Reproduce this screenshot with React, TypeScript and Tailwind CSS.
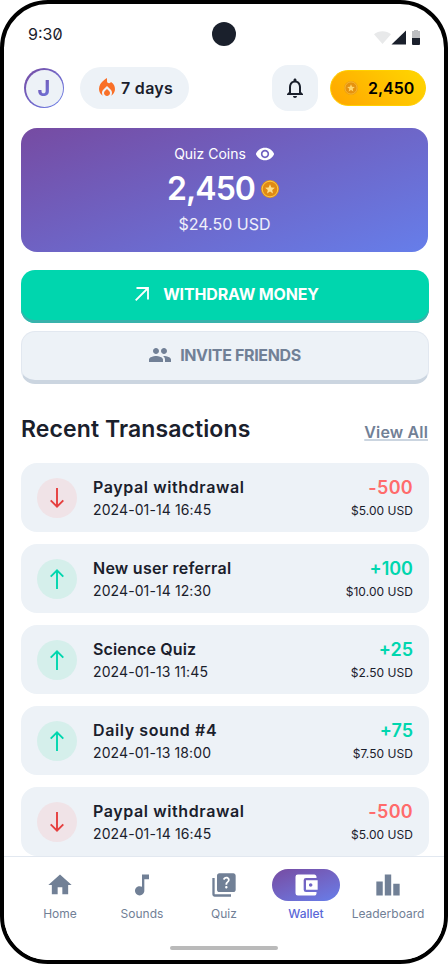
import {
  MdAccountBalanceWallet,
  MdHome,
  MdLeaderboard,
  MdLocalFireDepartment,
  MdMusicNote,
  MdNotificationsNone,
  MdPeople,
  MdQuiz,
  MdRemoveRedEye,
} from "react-icons/md";

const transactions = [
  { title: "Paypal withdrawal", date: "2024-01-14 16:45", coins: "-500", usd: "$5.00 USD", out: true, tracking: "tracking-[0.6px]" },
  { title: "New user referral", date: "2024-01-14 12:30", coins: "+100", usd: "$10.00 USD", out: false, tracking: "tracking-[0.25px]" },
  { title: "Science Quiz", date: "2024-01-13 11:45", coins: "+25", usd: "$2.50 USD", out: false, tracking: "tracking-[0.15px]" },
  { title: "Daily sound #4", date: "2024-01-13 18:00", coins: "+75", usd: "$7.50 USD", out: false, tracking: "tracking-[0.6px]" },
  { title: "Paypal withdrawal", date: "2024-01-14 16:45", coins: "-500", usd: "$5.00 USD", out: true, tracking: "tracking-[0.6px]" },
];

function Coin({ className }: { className: string }) {
  return (
    <svg viewBox="0 0 18 18" className={className}>
      <circle cx="9" cy="9" r="9" fill="#e8940f" />
      <circle cx="9" cy="9" r="7.8" fill="#e08a12" stroke="#f9c64a" strokeWidth="1" />
      <path d="M9 4.2l1.4 3.2 3.5.3-2.7 2.3.8 3.4L9 11.6l-3 1.800.8-3.400-2.700-2.300 3.500-.3z" fill="#ffe08a" />
    </svg>
  );
}

function StatusBar() {
  return (
    <div className="flex h-12 items-center justify-between px-6 pt-3">
      <span className="w-24 text-base">
        <span className="[font-feature-settings:'zero']">9:30</span>
      </span>
      <div className="size-6 rounded-full bg-[#1a202c]" />
      <svg width="96" height="16" viewBox="0 0 96 16" className="mt-[7px]">
        <path d="M50 4.200C54.500.2 62.500.2 67 4.200L58.500 14z" fill="#e8e9ea" />
        <path d="M82 .5v14H67.500z" fill="#1a202c" />
        <path d="M88 1h2V0h4v1h2v7h-8z" fill="#bcbec1" />
        <path d="M88 8h8v6a1 1 0 0 1-1 1h-6a1 1 0 0 1-1-1z" fill="#1a202c" />
      </svg>
    </div>
  );
}

function Header() {
  return (
    <header className="mt-[13px] flex h-[46px] items-center pr-[18px] pl-5">
      <div className="size-10 rounded-full bg-linear-135 from-[#764ba2] to-[#667eea] p-[1.5px]">
        <div className="flex size-full items-center justify-center rounded-full bg-[#edf2f7] text-[22px] font-bold">
          <span className="bg-linear-135 from-[#764ba2] to-[#667eea] bg-clip-text text-transparent">J</span>
        </div>
      </div>
      <div className="ml-4 flex h-[42px] w-[109px] items-center rounded-full bg-[#edf2f7] pl-[15px]">
        <MdLocalFireDepartment className="size-6 text-[#f97028]" />
        <span className="ml-[2px] text-base font-semibold tracking-[0.3px] whitespace-nowrap">7 days</span>
      </div>
      <button className="ml-auto flex size-[46px] items-center justify-center rounded-2xl bg-[#edf2f7]">
        <MdNotificationsNone className="size-6" />
      </button>
      <div className="ml-3 flex h-9 w-24 items-center rounded-full border border-[#ffd000] bg-linear-45 from-[#ffa500] to-[#ffd700] pl-[13px] text-black">
        <Coin className="size-[14px] opacity-80" />
        <span className="ml-[10px] text-base font-semibold">2,450</span>
      </div>
    </header>
  );
}

function BalanceCard() {
  return (
    <section className="mt-[17px] mr-4 ml-[17px] flex h-[124px] flex-col items-center rounded-2xl bg-linear-[160deg] from-[#764ba2] to-[#667eea] pt-4 text-white">
      <div className="flex h-5 items-center gap-[9px] text-sm">
        <span>Quiz Coins</span>
        <MdRemoveRedEye className="size-5" />
      </div>
      <div className="mt-[5px] flex h-10 items-center gap-[6px] pr-[3px]">
        <span className="text-[32px] font-semibold tracking-[-0.9px]">2,450</span>
        <Coin className="size-[18px]" />
      </div>
      <span className="mt-[3px] text-base leading-6 text-white/90">$24.50 USD</span>
    </section>
  );
}

function Actions() {
  return (
    <div className="mt-[18px] mr-[15px] ml-[17px] flex flex-col gap-2">
      <button className="flex h-[53px] items-center justify-center gap-[14px] rounded-[14px] bg-[#00d6ae] pb-[5px] pl-1 font-bold text-white shadow-[inset_0_-3px_0_#38b2ac]">
        <svg viewBox="0 0 14 14" className="size-[14px]" fill="none" stroke="currentColor" strokeWidth="1.8">
          <path d="M.7 13.300L13 1M1.500 1H13v11.500" />
        </svg>
        <span className="tracking-[-0.15px]">WITHDRAW MONEY</span>
      </button>
      <button className="flex h-[53px] items-center justify-center gap-2 rounded-[14px] border border-b-4 border-[#e2e8f0] border-b-[#cbd5e0] bg-[#edf2f7] pr-px pb-[2px] font-bold text-[#718096]">
        <MdPeople className="size-6" />
        <span className="tracking-[-0.35px]">INVITE FRIENDS</span>
      </button>
    </div>
  );
}

function Transactions() {
  return (
    <section className="mt-[29px] mr-[15px] ml-[17px]">
      <div className="flex h-8 items-center justify-between">
        <h2 className="text-[23px] font-semibold tracking-[0.1px]">Recent Transactions</h2>
        <a className="mt-[6px] mr-px text-base font-semibold tracking-[0.15px] text-[#718096] underline decoration-[#cbd5e0] decoration-2 underline-offset-1">
          View All
        </a>
      </div>
      <ul className="mt-[18px] flex flex-col gap-3">
        {transactions.map((t, i) => (
          <li key={i} className="flex h-[69px] items-center rounded-2xl bg-[#edf2f7] px-4">
            <div className={`flex size-10 items-center justify-center rounded-full ${t.out ? "bg-[#f0e3e7]" : "bg-[#d5efeb]"}`}>
              <svg
                viewBox="0 0 16 20"
                className={`h-5 w-4 ${t.out ? "rotate-180 text-[#e53e3e]" : "text-[#00d6ae]"}`}
                fill="none"
                stroke="currentColor"
                strokeWidth="1.9"
              >
                <path d="M8 20V2M1.700 7.700L8 1.400l6.300 6.300" />
              </svg>
            </div>
            <div className="ml-4 flex flex-col">
              <span className={`text-base leading-6 font-semibold ${t.tracking}`}>{t.title}</span>
              <span className="text-sm leading-[21px] tracking-[0.1px]">{t.date}</span>
            </div>
            <div className="ml-auto flex flex-col items-end">
              <span className={`text-lg leading-[27px] font-semibold ${t.out ? "tracking-[0.3px] text-[#ff6b6b]" : "text-[#00d6ae]"}`}>
                {t.coins}
              </span>
              <span className="text-xs leading-5 tracking-[0.05px]">{t.usd}</span>
            </div>
          </li>
        ))}
      </ul>
    </section>
  );
}

const tabs = [
  { label: "Home", icon: <MdHome className="size-7" /> },
  { label: "Sounds", icon: <MdMusicNote className="size-7" /> },
  { label: "Quiz", icon: <MdQuiz className="size-7" /> },
  { label: "Wallet", icon: <MdAccountBalanceWallet className="size-7" />, active: true },
  { label: "Leaderboard", icon: <MdLeaderboard className="size-7" /> },
];

function BottomNav() {
  return (
    <nav className="flex h-[104px] shrink-0 flex-col border-t border-[#e2e8f0] bg-white">
      <div className="flex justify-center pt-3">
        {tabs.map((tab) => (
          <div key={tab.label} className="flex w-[82px] flex-col items-center text-[#718096]">
            <div
              className={`flex h-8 w-[68px] items-center justify-center rounded-full ${
                tab.active ? "bg-linear-160 from-[#764ba2] to-[#667eea] text-white" : ""
              }`}
            >
              {tab.icon}
            </div>
            <span className={`mt-[5px] text-xs leading-4 ${tab.active ? "font-medium text-[#5a67d8]" : ""}`}>{tab.label}</span>
          </div>
        ))}
      </div>
      <div className="mt-auto mb-[10px] h-1 w-[108px] self-center rounded-full bg-[#bababa]" />
    </nav>
  );
}

export default function App() {
  return (
    <div className="flex h-[964px] w-[448px] flex-col overflow-hidden rounded-[48px] border-4 border-black bg-white font-['Inter',sans-serif] text-[#1a202c]">
      <div className="min-h-0 flex-1 overflow-hidden">
        <StatusBar />
        <Header />
        <BalanceCard />
        <Actions />
        <Transactions />
      </div>
      <BottomNav />
    </div>
  );
}
